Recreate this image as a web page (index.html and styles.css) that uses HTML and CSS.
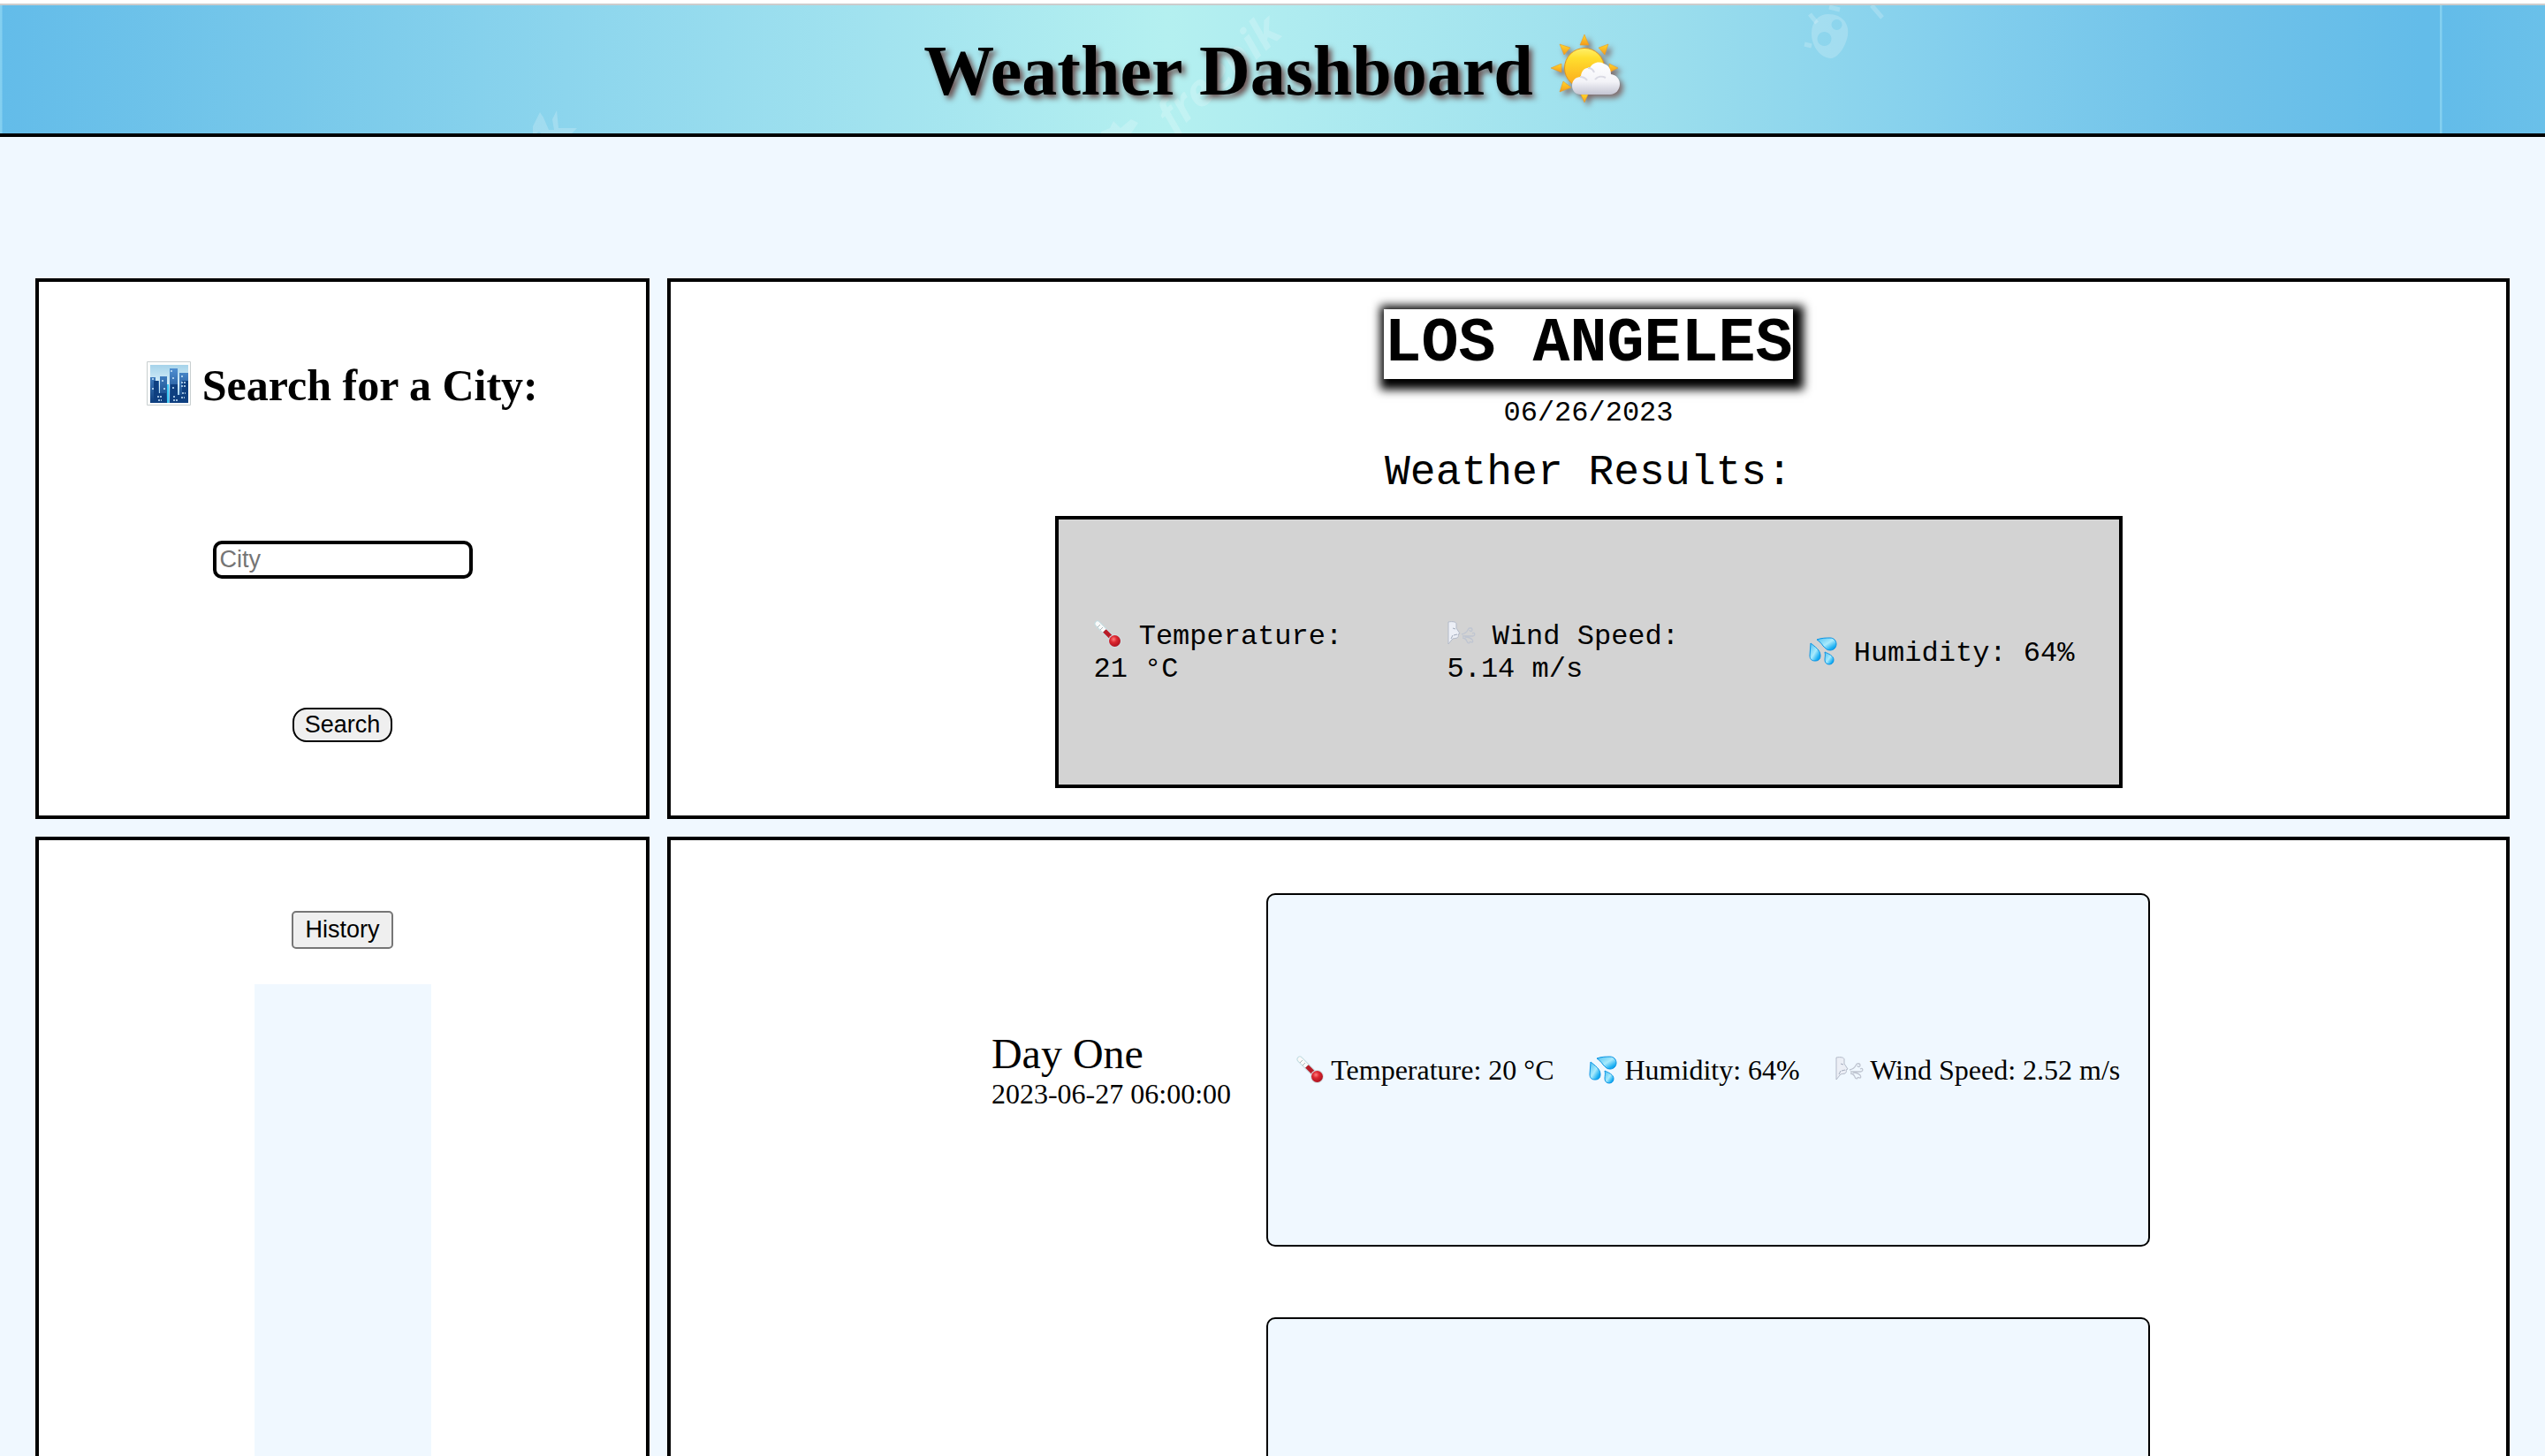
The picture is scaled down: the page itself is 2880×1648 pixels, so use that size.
FILE: index.html
```html
<!DOCTYPE html>
<html lang="en">
<head>
<meta charset="utf-8">
<title>Weather Dashboard</title>
<link rel="stylesheet" href="styles.css">
</head>
<body>
<svg class="sprite" aria-hidden="true">
  <defs>
    <linearGradient id="sunFill" x1="0" y1="0" x2="0" y2="1"><stop offset="0" stop-color="#fff06a"/><stop offset=".25" stop-color="#ffde2e"/><stop offset="1" stop-color="#fba51a"/></linearGradient>
    <linearGradient id="rayFill" x1="0" y1="0" x2="0" y2="1"><stop offset="0" stop-color="#ffd92b"/><stop offset="1" stop-color="#f59a1b"/></linearGradient>
    <linearGradient id="cloudFill" x1="0" y1="0" x2="0" y2="1"><stop offset="0" stop-color="#ffffff"/><stop offset=".6" stop-color="#f3f3f8"/><stop offset="1" stop-color="#c4c5d2"/></linearGradient>
    <linearGradient id="skyFill" x1="0" y1="0" x2="0" y2="1"><stop offset="0" stop-color="#a5d3ea"/><stop offset=".5" stop-color="#d8effa"/><stop offset="1" stop-color="#7dbbe6"/></linearGradient>
    <linearGradient id="towerFill" x1="0" y1="0" x2="0" y2="1"><stop offset="0" stop-color="#4f8fd2"/><stop offset="1" stop-color="#0d3d7c"/></linearGradient>
    <linearGradient id="dropFill" x1="0" y1="0" x2="1" y2="1"><stop offset="0" stop-color="#4cc0f2"/><stop offset=".5" stop-color="#a9eafc"/><stop offset=".8" stop-color="#18aef2"/><stop offset="1" stop-color="#0a8fe2"/></linearGradient>
    <radialGradient id="bulbFill" cx=".4" cy=".35" r=".7"><stop offset="0" stop-color="#ff7d7d"/><stop offset=".4" stop-color="#dc2730"/><stop offset="1" stop-color="#a80f1d"/></radialGradient>
  </defs>
  <symbol id="sun" viewBox="0 0 80 80">
    <g fill="url(#rayFill)" stroke="#e59a2c" stroke-width=".6"><path d="M38 1l5 12h-10z"/><path d="M10 12l12 4-7 8z"/><path d="M65 12l-4 12-7-8z"/><path d="M0 39l12-5v10z"/><path d="M76 39l-10-5v10z"/><path d="M10 66l4-12 9 7z"/><path d="M38 78l-4-9h8z"/></g>
    <circle cx="38" cy="39" r="22.500" fill="url(#sunFill)" stroke="#e2941f"/>
    <path d="M34 69c-6 0-10-4-10-10 0-6 4-10 10-10 0-7 5-11 10-10 3-6 10-8 16-5 6 2 8 7 8 12 6 1 10 5 10 11 0 7-5 12-11 12z" fill="url(#cloudFill)"/>
    <path d="M33 49c4 0 6 1 8 4M42 39c4 0 6 2 7 5M62 50c-4-2-9-2-12 2" fill="none" stroke="#dadae4" stroke-width="2"/>
  </symbol>
  <symbol id="city" viewBox="0 0 50 50">
    <path d="M.5.5h49v49H.5z" fill="#fbfcfc" stroke="#c9cfd0"/>
    <path d="M4 4h43v43H4z" fill="url(#skyFill)"/>
    <path d="M4 18h6v4h4v25H4zM15 17h8v30h-8zM26 8h9v39h-9zM37 13h10v34H37z" fill="url(#towerFill)"/>
    <path d="M8 22h5v25H8zM27 26h8v21h-8zM40 22h7v25h-7zM10 36h12v11H10zM27 38h19v9H27z" fill="#0e3f80"/>
    <path d="M24 26v21" stroke="#39c8f4" stroke-width="2"/>
    <path d="M6 20h2M17 22h2M19 31h2M27 11h2M29 19h2M29 30h3M39 17h2M39 24h5M39 28h5M6 31h2M12 40h5M13 44h4M30 40h3M30 44h5M40 36h4M39 41h4" stroke="#cbe7fb" stroke-width="1.500" stroke-dasharray="2 1"/>
  </symbol>
  <symbol id="thermo" viewBox="0 0 32 32">
    <path d="M4 4l19 19" stroke="#c3dde2" stroke-width="7" stroke-linecap="round"/>
    <path d="M4 4l18 18" stroke="#fafafa" stroke-width="5" stroke-linecap="round"/>
    <path d="M4 8l3-3M7 11l3-3M10 14l3-3" stroke="#aab6b8" stroke-width="1"/>
    <path d="M12 12l11 11" stroke="#b81c28" stroke-width="5"/>
    <circle cx="23.500" cy="23.500" r="7.500" fill="#d3dde2"/>
    <circle cx="23.500" cy="23.500" r="6.500" fill="url(#bulbFill)"/>
  </symbol>
  <symbol id="drops" viewBox="0 0 32 32">
    <g fill="url(#dropFill)" stroke="#0a94e4" stroke-width="1">
      <path d="M9 3C14 1 20 1 24 1c4 0 7 3 7 7s-3 7-7 7-5-2-8-5C14 7 12 5 9 3z"/>
      <path d="M2 7c5 4 11 8 11 14 0 4-2 6-6 6-4 0-6-2-6-6 0-5 1-9 1-14z"/>
      <path d="M18 17c4 2 10 4 10 9 0 3-2 5-5 5s-5-2-5-5c0-4 1-5 0-9z"/>
    </g>
  </symbol>
  <symbol id="wind" viewBox="0 0 32 32">
    <path d="M1 2c5-1 9 0 9 2v5c1 2 3 4 4 6l-2 1c1 2 0 3-1 4-3 1-5 0-6 2l-4 5z" fill="#eceff6" stroke="#b3bac8"/>
    <path d="M6 9l3 1M7 17l4-1M4 21l2-4" stroke="#a2abbc" fill="none"/>
    <path d="M16 16c5-1 6-3 7-5 1-3 5-3 5 0 0 2-3 2-3 0M17 18h12c3-1 2-5-1-3M17 20c4 0 4 2 5 4 1 3 4 2 3 0M20 19c4 0 6 1 8 3 2 3-1 4-2 2" fill="none" stroke="#bfc5d1" stroke-width="1.300"/>
  </symbol>
</svg>

<header class="banner">
  <svg class="watermark" aria-hidden="true">
    <g fill="#ffffff" fill-opacity=".2">
      <path d="M603 145v-8l8-16 4 6 6 14 6 0-2-12 5-10 2 20h21l-8 8h-30l-5-4-6 4zM1246 143l10-4 4-8 8 8 12-10 8 4-8 12h-34z"/>
      <text class="mark" transform="translate(1328 146) rotate(-42)">freepik</text>
      <path fill-rule="evenodd" d="M2069 10c17 0 24 12 22 24-3 16-13 26-19 26-12 0-22-14-22-28s8-22 19-22zM2078 16a6 6 0 1 0 1 0zM2064 30a8 8 0 1 0 1 0z"/>
      <path d="M2048 10l8 10M2042 44l8 2M2070 2l12 3M2118 0l12 14" stroke="#fff" stroke-opacity=".2" stroke-width="5"/>
    </g>
  </svg>
  <h1 class="title">Weather Dashboard <svg class="emoji emoji-xl" role="img" aria-label="Sun behind cloud"><use href="#sun"/></svg></h1>
</header>

<main class="board">
  <form class="panel search">
    <h2 class="search-title"><label for="city-input"><svg class="emoji emoji-lg" aria-hidden="true"><use href="#city"/></svg> Search for a City:</label></h2>
    <input class="city-input" id="city-input" type="text" placeholder="City">
    <button class="button button-round" type="button">Search</button>
  </form>

  <section class="panel current">
    <h2 class="city-name">LOS ANGELES</h2>
    <p class="current-date">06/26/2023</p>
    <h3 class="results-title">Weather Results:</h3>
    <div class="results">
      <p><svg class="emoji" aria-hidden="true"><use href="#thermo"/></svg> Temperature: 21 °C</p>
      <p><svg class="emoji" aria-hidden="true"><use href="#wind"/></svg> Wind Speed: 5.14 m/s</p>
      <p><svg class="emoji" aria-hidden="true"><use href="#drops"/></svg> Humidity: 64%</p>
    </div>
  </section>

  <aside class="panel history">
    <button class="button" type="button">History</button>
    <div class="history-list"></div>
  </aside>

  <section class="panel forecast">
    <div class="day-label">
      <h3 class="day-name">Day One</h3>
      <p>2023-06-27 06:00:00</p>
    </div>
    <div class="day-card">
      <p><svg class="emoji" aria-hidden="true"><use href="#thermo"/></svg> Temperature: 20 °C</p>
      <p><svg class="emoji" aria-hidden="true"><use href="#drops"/></svg> Humidity: 64%</p>
      <p><svg class="emoji" aria-hidden="true"><use href="#wind"/></svg> Wind Speed: 2.52 m/s</p>
    </div>
    <div class="day-card"></div>
  </section>
</main>
</body>
</html>
```
FILE: styles.css
```css
* {
  box-sizing: border-box;
  margin: 0;
}

body {
  background: #f0f8ff;
  color: #000;
  font: 32px "Liberation Serif", "Times New Roman", serif;
}

.sprite {
  position: absolute;
  width: 0;
  height: 0;
}

.emoji {
  width: 32px;
  height: 32px;
  vertical-align: -5px;
}

.emoji-lg {
  width: 50px;
  height: 50px;
  vertical-align: -6px;
}

.emoji-xl {
  width: 80px;
  height: 80px;
  vertical-align: -11px;
  filter: drop-shadow(4px 4px 3px #806c6c);
}

/* Banner */
.banner {
  position: relative;
  padding: 28px 0 24px;
  border-top: 6px solid #ccc;
  border-bottom: 4px solid #000;
  border-image: linear-gradient(#fff 4px, #ccc 4px, #ccc 6px, #000 6px) 6 0 4 / 6px 0 4px;
  background: linear-gradient(90deg, #84d0f0 2px, #63bce9 3px, #77c8ea 330px, #8cd5ed 640px, #a2e3ef 1000px, #b4f0f0 1320px, #aeebf0 1480px, #9bdeed 1880px, #82ceed 2230px, #70c2e9 2500px, #63bce9 2740px) 0 0 / 2761px 100%;
}

.watermark {
  position: absolute;
  inset: 0;
  width: 100%;
  height: 100%;
}

.mark {
  font: italic bold 50px "Open Sans", sans-serif;
}

.title {
  position: relative;
  font-size: 80px;
  line-height: 93px;
  text-align: center;
  text-shadow: 4px 4px 6px #6b5252;
}

/* Board */
.board {
  display: grid;
  grid-template-columns: 1fr 3fr;
  gap: 20px;
  padding: 160px 40px 40px;
}

.panel {
  display: flex;
  flex-direction: column;
  align-items: center;
  min-width: 0;
  border: 4px solid #000;
  background: #fff;
}

.search {
  justify-content: space-between;
  padding: 88px 20px 83px;
}

.search-title {
  font-size: 50px;
  line-height: 59px;
}

.city-input {
  width: 294px;
  height: 43px;
  padding: 0 4px;
  border: 4px solid #000;
  border-radius: 10px;
  background: #fff;
  font: 27px "Liberation Sans", Arial, sans-serif;
}

.city-input::placeholder {
  color: #757575;
}

.button {
  height: 43px;
  padding: 0 13px;
  border: 2px solid #767676;
  border-radius: 5px;
  background: #efefef;
  color: #000;
  font: 27px "Liberation Sans", Arial, sans-serif;
}

.button-round {
  height: 39px;
  padding: 0 12px;
  border-color: #000;
  border-radius: 16px;
}

/* Current weather */
.current {
  gap: 21px;
  padding: 31px 20px;
  font-family: "Courier New", "Liberation Mono", monospace;
}

.city-name {
  background: #fff;
  font-size: 70px;
  line-height: 79px;
  box-shadow: 4px 4px 10px 8px #000;
}

.current-date {
  line-height: 36px;
}

.results-title {
  font-size: 48px;
  font-weight: normal;
  line-height: 56px;
}

.results {
  display: grid;
  grid-template-columns: 300fr 309fr 311fr;
  align-items: center;
  gap: 100px;
  width: 1208px;
  max-width: 100%;
  height: 308px;
  padding: 2px 40px 0;
  border: 4px solid #000;
  background: lightgray;
  line-height: 37px;
}

/* History */
.history {
  gap: 40px;
  padding: 80px 20px 0;
}

.history-list {
  flex: 1;
  width: 200px;
  background: #f0f8ff;
}

/* Forecast */
.forecast {
  display: grid;
  grid-template-columns: auto 1000px;
  justify-content: center;
  align-items: center;
  gap: 80px 40px;
  padding: 60px 40px 60px 0;
}

.day-name {
  font-size: 48px;
  font-weight: normal;
  line-height: 55px;
}

.day-label {
  line-height: 37px;
}

.day-card {
  display: flex;
  grid-column: 2;
  align-items: center;
  justify-content: center;
  gap: 40px;
  width: 100%;
  height: 400px;
  border: 2px solid #000;
  border-radius: 10px;
  background: #f0f8ff;
}
```
